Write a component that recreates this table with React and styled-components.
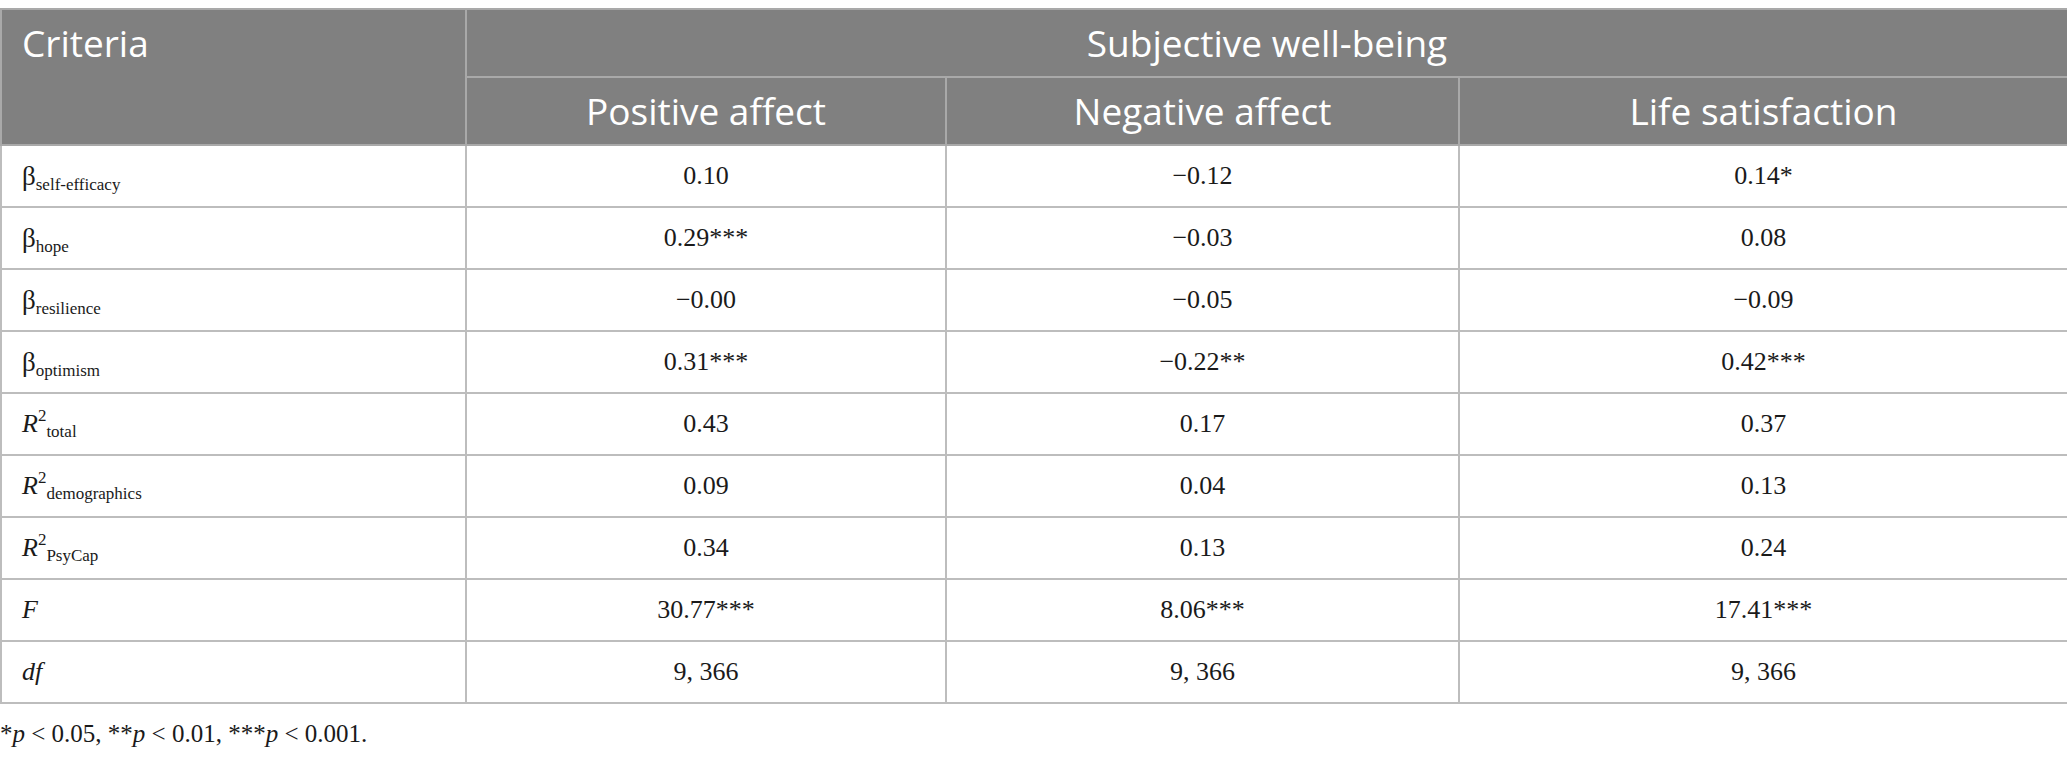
import React from "react";
import styled, { createGlobalStyle } from "styled-components";

const GlobalStyle = createGlobalStyle`
  html, body {
    margin: 0;
    padding: 0;
    background: #ffffff;
  }
  body {
    font-family: "Liberation Serif", "Times New Roman", serif;
    color: #1a1a1a;
  }
`;

const Page = styled.div`
  padding-top: 8px;
  width: 2067px;
`;

const Table = styled.table`
  width: 2067px;
  border-collapse: collapse;
  table-layout: fixed;
`;

const Col = styled.col`
  width: ${(p) => p.$w}px;
`;

const HeadRow = styled.tr`
  height: 68px;
`;

const HeadCell = styled.th`
  background: #808080;
  color: #ffffff;
  font-family: "Open Sans", "Noto Sans", sans-serif;
  font-weight: 400;
  font-size: 37px;
  line-height: 48px;
  border: 2px solid #a9a9a9;
  padding: 0 20px;
  text-align: ${(p) => p.$align || "center"};
  vertical-align: ${(p) => p.$valign || "middle"};
  padding-top: ${(p) => (p.$valign === "top" ? "9px" : "0")};
`;

const BodyRow = styled.tr`
  height: 62px;
`;

const LabelCell = styled.td`
  border: 2px solid #bdbdbd;
  padding: 0 20px;
  font-size: 26px;
  text-align: left;
  vertical-align: middle;
  white-space: nowrap;
`;

const ValueCell = styled.td`
  border: 2px solid #bdbdbd;
  padding: 0 10px;
  font-size: 26px;
  text-align: center;
  vertical-align: middle;
`;

const Beta = styled.span`
  font-size: 27px;
`;

const Sub = styled.sub`
  font-size: 17px;
  vertical-align: -5px;
  line-height: 0;
`;

const Sup = styled.sup`
  font-size: 17px;
  vertical-align: 11px;
  line-height: 0;
`;

const Ital = styled.i`
  font-style: italic;
`;

const Footnote = styled.p`
  margin: 16px 0 0 0;
  font-size: 25px;
  line-height: 28px;
`;

const rows = [
  { label: <><Beta>β</Beta><Sub>self-efficacy</Sub></>, v: ["0.10", "−0.12", "0.14*"] },
  { label: <><Beta>β</Beta><Sub>hope</Sub></>, v: ["0.29***", "−0.03", "0.08"] },
  { label: <><Beta>β</Beta><Sub>resilience</Sub></>, v: ["−0.00", "−0.05", "−0.09"] },
  { label: <><Beta>β</Beta><Sub>optimism</Sub></>, v: ["0.31***", "−0.22**", "0.42***"] },
  { label: <><Ital>R</Ital><Sup>2</Sup><Sub>total</Sub></>, v: ["0.43", "0.17", "0.37"] },
  { label: <><Ital>R</Ital><Sup>2</Sup><Sub>demographics</Sub></>, v: ["0.09", "0.04", "0.13"] },
  { label: <><Ital>R</Ital><Sup>2</Sup><Sub>PsyCap</Sub></>, v: ["0.34", "0.13", "0.24"] },
  { label: <Ital>F</Ital>, v: ["30.77***", "8.06***", "17.41***"] },
  { label: <Ital>df</Ital>, v: ["9, 366", "9, 366", "9, 366"] },
];

export default function App() {
  return (
    <Page>
      <GlobalStyle />
      <Table>
        <colgroup>
          <Col $w={465} />
          <Col $w={480} />
          <Col $w={513} />
          <Col $w={609} />
        </colgroup>
        <thead>
          <HeadRow>
            <HeadCell rowSpan={2} $align="left" $valign="top">Criteria</HeadCell>
            <HeadCell colSpan={3}>Subjective well-being</HeadCell>
          </HeadRow>
          <HeadRow>
            <HeadCell>Positive affect</HeadCell>
            <HeadCell>Negative affect</HeadCell>
            <HeadCell>Life satisfaction</HeadCell>
          </HeadRow>
        </thead>
        <tbody>
          {rows.map((r, i) => (
            <BodyRow key={i}>
              <LabelCell>{r.label}</LabelCell>
              {r.v.map((val, j) => (
                <ValueCell key={j}>{val}</ValueCell>
              ))}
            </BodyRow>
          ))}
        </tbody>
      </Table>
      <Footnote>
        *<Ital>p</Ital> &lt; 0.05, **<Ital>p</Ital> &lt; 0.01, ***<Ital>p</Ital> &lt; 0.001.
      </Footnote>
    </Page>
  );
}
